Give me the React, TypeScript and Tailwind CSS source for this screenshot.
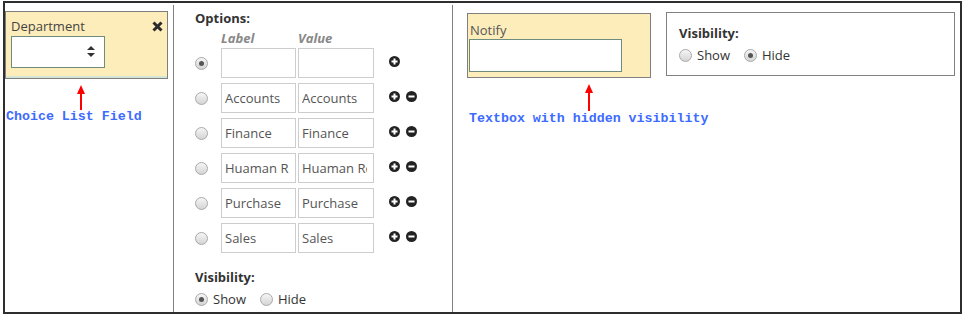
const OPTIONS = ['', 'Accounts', 'Finance', 'Huaman Resources', 'Purchase', 'Sales']

function Radio({ checked = false }: { checked?: boolean }) {
  return (
    <span className="flex h-[13px] w-[13px] shrink-0 items-center justify-center rounded-full border border-[#a9a9a9] bg-gradient-to-b from-[#f6f6f6] to-[#d4d4d4]">
      {checked && <span className="h-[5px] w-[5px] rounded-full bg-[#555]" />}
    </span>
  )
}

function RoundIcon({ minus = false }: { minus?: boolean }) {
  return (
    <svg width="11" height="11" viewBox="0 0 11 11" className="shrink-0">
      <circle cx="5.5" cy="5.5" r="5.5" fill="#222" />
      <rect x="2.5" y="4.5" width="6" height="2" fill="#fff" />
      {!minus && <rect x="4.5" y="2.5" width="2" height="6" fill="#fff" />}
    </svg>
  )
}

function Arrow({ h }: { h: number }) {
  return (
    <svg width="10" height={h} viewBox={`0 0 10 ${h}`} className="block">
      <polygon points="5,0 9,9 1,9" fill="#f00" />
      <rect x="4" y="8" width="2" height={h - 8} fill="#f00" />
    </svg>
  )
}

function VisibilityRow({ show }: { show: boolean }) {
  return (
    <div className="flex h-[18px] items-center text-[13px] leading-[18px] text-[#333]">
      <Radio checked={show} />
      <span className="ml-[5px]">Show</span>
      <span className="ml-[14px]">
        <Radio checked={!show} />
      </span>
      <span className="ml-[5px]">Hide</span>
    </div>
  )
}

export default function App() {
  return (
    <div className="min-h-screen bg-white font-['Open_Sans',sans-serif]">
      <div className="ml-[3px] mt-[1px] flex h-[313px] w-[959px] border-2 border-[#2e2e2e]">
        {/* Choice list field */}
        <div className="w-[168px] shrink-0">
          <div className="mt-[8px] flex h-[68px] w-[163px] flex-col border border-[#7f7f7f] bg-[#fdedbb]">
            <div className="flex items-center justify-between pl-[5px] pr-[4px] pt-[5px]">
              <span className="text-[13px] leading-[18px] text-[#444]">Department</span>
              <svg width="11" height="11" viewBox="0 0 11 11">
                <path d="M1.5 1.5 L9.5 9.5 M9.5 1.5 L1.5 9.5" stroke="#2a2a2a" strokeWidth="3" />
              </svg>
            </div>
            <div className="ml-[5px] mt-px flex h-[32px] w-[94px] items-center justify-end border border-[#6f8d7c] bg-white pr-[9px]">
              <svg width="8" height="12" viewBox="0 0 8 12">
                <polygon points="4,0 8,4 0,4" fill="#333" />
                <polygon points="0,7 8,7 4,11" fill="#333" />
              </svg>
            </div>
            <div className="mt-auto h-[2px] bg-[#d3e6d5]" />
          </div>
          <div className="ml-[71px] mt-[6px]">
            <Arrow h={25} />
          </div>
          <div className="ml-px -mt-[2px] font-['Liberation_Mono',monospace] text-[13.3px] font-bold leading-[17px] text-[#3d6bff]">
            Choice List Field
          </div>
        </div>

        {/* Options panel */}
        <div className="mt-[2px] w-[280px] shrink-0 border-x border-[#808080] pl-[21px] pt-[4px]">
          <div className="text-[13px] font-bold leading-[18px] text-[#333]">Options:</div>
          <div className="mt-[2px] flex text-[13px] font-bold italic leading-[18px] text-[#888]">
            <span className="ml-[26px] w-[77px]">Label</span>
            <span>Value</span>
          </div>
          <div className="mt-px flex flex-col gap-[5px]">
            {OPTIONS.map((o, i) => (
              <div key={i} className="flex h-[30px] items-center">
                <span className="w-[26px]">
                  <Radio checked={i === 0} />
                </span>
                <input
                  readOnly
                  value={o}
                  className="h-[30px] w-[75px] border border-[#cdcdcd] pl-[3px] pr-[6px] text-[13px] text-[#555] outline-none"
                />
                <input
                  readOnly
                  value={o}
                  className="ml-[2px] h-[30px] w-[76px] border border-[#cdcdcd] pl-[3px] pr-[6px] text-[13px] text-[#555] outline-none"
                />
                <div className="-mt-[3px] ml-[15px] flex gap-[6px]">
                  <RoundIcon />
                  {i > 0 && <RoundIcon minus />}
                </div>
              </div>
            ))}
          </div>
          <div className="mt-[15px] text-[13px] font-bold leading-[18px] text-[#333]">Visibility:</div>
          <div className="mt-[4px]">
            <VisibilityRow show />
          </div>
        </div>

        {/* Notify textbox */}
        <div className="ml-[14px] w-[184px] shrink-0">
          <div className="mt-[10px] h-[65px] border border-[#7f7f7f] bg-[#fdedbb] pl-px pt-[7px]">
            <div className="pl-px text-[13px] leading-[18px] text-[#555]">Notify</div>
            <div className="h-[33px] w-[153px] border border-[#6f8d7c] bg-white" />
          </div>
          <div className="ml-[117px] mt-[6px]">
            <Arrow h={27} />
          </div>
          <div className="ml-[2px] -mt-px font-['Liberation_Mono',monospace] text-[13.3px] font-bold leading-[17px] whitespace-nowrap text-[#3d6bff]">
            Textbox with hidden visibility
          </div>
        </div>

        {/* Visibility box */}
        <div className="ml-[15px] mt-[9px] h-[64px] w-[289px] shrink-0 border border-[#808080] pl-[12px] pt-[11px]">
          <div className="text-[13px] font-bold leading-[18px] text-[#333]">Visibility:</div>
          <div className="mt-[4px]">
            <VisibilityRow show={false} />
          </div>
        </div>
      </div>
    </div>
  )
}
